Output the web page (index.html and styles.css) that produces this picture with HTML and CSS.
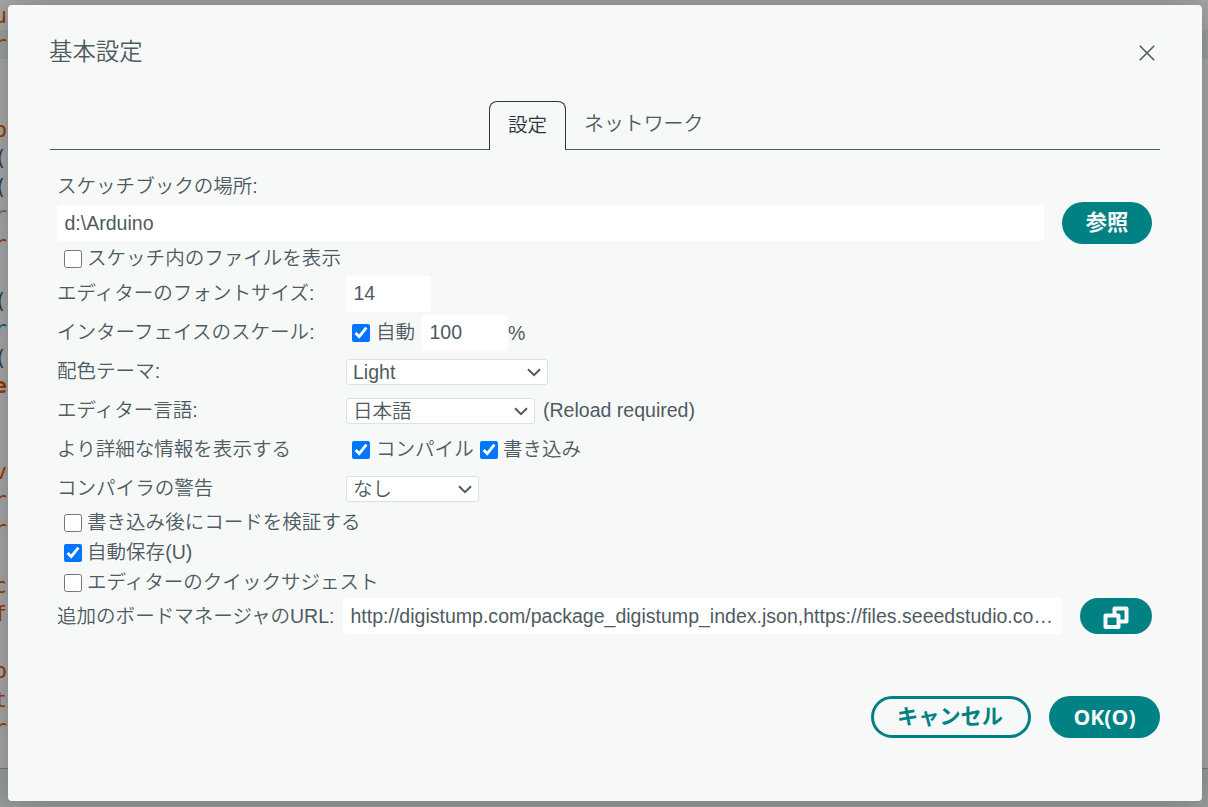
FILE: index.html
```html
<!DOCTYPE html>
<html lang="ja">
<head>
<meta charset="utf-8">
<title>基本設定</title>
<link rel="stylesheet" href="styles.css">
</head>
<body>
<div class="editor">
  <div class="line">u</div><div class="line current">r</div><div class="line"></div><div class="line"></div>
  <div class="line">p</div><div class="line plain">(</div><div class="line plain">(</div><div class="line comment">r</div>
  <div class="line">r</div><div class="line"></div><div class="line plain">(</div><div class="line type">r</div>
  <div class="line plain">(</div><div class="line strong">e</div><div class="line"></div><div class="line"></div>
  <div class="line">v</div><div class="line">r</div><div class="line">r</div><div class="line"></div>
  <div class="line">c</div><div class="line">f</div><div class="line"></div><div class="line">p</div>
  <div class="line">t</div><div class="line">r</div>
  <div class="panel"></div>
</div>
<main class="dialog">
  <header class="head">
    <h1 class="title">基本設定</h1>
    <svg class="close" viewBox="0 0 16 16"><path d="M0.8 0.8 15.2 15.2M15.2 0.8 0.8 15.2"/></svg>
  </header>
  <nav class="tabs">
    <div class="tab active"><span class="t">設定</span></div>
    <div class="tab"><span class="t wide">ネットワーク</span></div>
  </nav>
  <section class="content">
    <div class="caption"><span class="t">スケッチブックの場所:</span></div>
    <div class="path-row">
      <div class="field path grow"><span class="t">d:\Arduino</span></div>
      <button class="btn browse"><span class="t">参照</span></button>
    </div>
    <label class="check first"><input type="checkbox"><span class="t">スケッチ内のファイルを表示</span></label>
    <div class="grid">
      <span class="t">エディターのフォントサイズ:</span>
      <div class="cell"><div class="field size">14</div></div>
      <span class="t">インターフェイスのスケール:</span>
      <div class="cell"><input class="inset" type="checkbox" checked><span class="t auto">自動</span><div class="field scale">100</div><span class="percent">%</span></div>
      <span class="t">配色テーマ:</span>
      <div class="cell"><div class="select theme"><span>Light</span><svg class="chev" viewBox="0 0 14 9"><path d="M1 1.2 7 7.2 13 1.2"/></svg></div></div>
      <span class="t">エディター言語:</span>
      <div class="cell"><div class="select language"><span>日本語</span><svg class="chev" viewBox="0 0 14 9"><path d="M1 1.2 7 7.2 13 1.2"/></svg></div><span class="t reload">(Reload required)</span></div>
      <span class="t">より詳細な情報を表示する</span>
      <div class="cell"><input class="inset" type="checkbox" checked><span class="t compile">コンパイル</span><input class="upload" type="checkbox" checked><span class="t up">書き込み</span></div>
      <span class="t">コンパイラの警告</span>
      <div class="cell"><div class="select warn"><span>なし</span><svg class="chev" viewBox="0 0 14 9"><path d="M1 1.2 7 7.2 13 1.2"/></svg></div></div>
    </div>
    <div class="checks">
      <label class="check"><input type="checkbox"><span class="t">書き込み後にコードを検証する</span></label>
      <label class="check"><input type="checkbox" checked><span class="t">自動保存(U)</span></label>
      <label class="check"><input type="checkbox"><span class="t">エディターのクイックサジェスト</span></label>
    </div>
    <div class="url-row">
      <span class="t url-label">追加のボードマネージャのURL:</span>
      <div class="field grow"><span class="url">http://digistump.com/package_digistump_index.json,https://files.seeedstudio.com/arduino/package_seeeduino_boards_index.json</span></div>
      <button class="btn expand" aria-label="URL"><svg viewBox="0 0 26 24"><path class="ring" d="M11.5 2.5h12v13h-12z"/><path class="front" d="M2.5 9.5h13v11.5h-13z"/></svg></button>
    </div>
  </section>
  <footer class="foot">
    <button class="btn cancel"><span class="t">キャンセル</span></button>
    <button class="btn ok">OK(O)</button>
  </footer>
</main>
</body>
</html>
```
FILE: styles.css
```css
* { box-sizing: border-box; }
body {
  margin: 0;
  width: 1208px;
  height: 807px;
  overflow: hidden;
  position: relative;
  background: #a6a6a6;
  color: #4e5b61;
  font: 350 19.55px/30px "Liberation Sans", "Noto Sans CJK JP", sans-serif;
}
.editor {
  position: absolute;
  inset: 0;
  padding-top: 1.5px;
  display: flex;
  flex-direction: column;
}
.line {
  flex: none;
  width: 8px;
  height: 28.5px;
  padding-right: 1px;
  display: flex;
  justify-content: flex-end;
  overflow: hidden;
  color: #963b00;
  font: 22px/28.5px "DejaVu Sans Mono", monospace;
}
.line.current { width: 100%; padding-right: 1201px; background: #9c9f9f; }
.line.plain { color: #2d3f50; }
.line.comment { color: #656d6e; }
.line.type { color: #00666b; }
.line.strong { font-weight: bold; }
.panel { margin-top: auto; height: 39px; border-top: 1px solid #777b7b; background: #979c9c; }
.dialog {
  position: absolute;
  left: 8px;
  top: 5px;
  width: 1194px;
  height: 796px;
  padding: 0 42px;
  display: flex;
  flex-direction: column;
  background: #f7f9f9;
  border-radius: 4px;
  box-shadow: 0 0 32px rgba(0, 0, 0, .25);
}
.head { height: 96px; display: flex; justify-content: space-between; padding: 27px 5px 0 0; }
.title { margin: 0 0 0 -1px; font: 350 23.4px/36px "Noto Sans CJK JP", sans-serif; }
.close { width: 16px; height: 16px; margin-top: 13px; fill: none; stroke: #4e5b61; stroke-width: 1.6; }
.t { white-space: nowrap; }
.tabs { height: 49px; padding-left: 439px; display: flex; border-bottom: 1px solid #4e5b61; }
.tab { height: 49px; padding: 0 18px; line-height: 47px; }
.tab.active {
  width: 77px;
  background: #f7f9f9;
  border: 1px solid #2c353a;
  border-bottom: 0;
  border-radius: 8px 8px 0 0;
  color: #2c353a;
  line-height: 46px;
}
.wide { font-size: 19.9px; }
.content { padding: 21px 8px 0 7px; }
.caption { height: 31px; }
.path-row { height: 42px; display: flex; align-items: center; gap: 18px; }
.field { height: 36px; padding: 0 7.5px; line-height: 34px; background: #fff; border-radius: 3px; }
.path { line-height: 36px; }
.grow { flex: 1; min-width: 0; }
.btn {
  border: 0;
  border-radius: 21px;
  background: #008184;
  color: #f7f9f9;
  padding: 0;
  height: 42px;
  display: flex;
  align-items: center;
  justify-content: center;
  font: 700 21.2px/38px "Open Sans", "Noto Sans CJK JP", sans-serif;
}
.browse { width: 90px; padding-bottom: 3px; }
input[type="checkbox"] { width: 18px; height: 18px; margin: 0; flex: none; }
.check { height: 30px; display: flex; align-items: center; gap: 5px; padding-left: 7px; }
.check .t { line-height: 28px; }
.check input { position: relative; top: 0.5px; }
.first { height: 31px; padding-bottom: 3px; }
.grid { display: grid; grid-template-columns: 289px 1fr; grid-auto-rows: 38px; row-gap: 1px; line-height: 37px; }
.cell { display: flex; align-items: center; }
.size { width: 85px; }
.scale { width: 86px; }
.inset { margin-left: 6px !important; }
.auto { width: 54px; padding-left: 6px; margin-right: -2px; line-height: 35px; padding-bottom: 2px; }
.percent { padding-top: 1px; }
.select {
  height: 26px;
  padding: 0 6px;
  display: flex;
  align-items: center;
  justify-content: space-between;
  line-height: 24px;
  background: #fff;
  border: 1px solid #dae3e3;
  border-radius: 3px;
}
.theme { width: 202px; }
.language { width: 189px; }
.warn { width: 133px; }
.chev { width: 14px; height: 9px; fill: none; stroke: #4e5b61; stroke-width: 2; }
.reload { padding: 0 0 2px 8px; }
.compile { width: 110px; padding: 0 0 2px 6px; }
.up { padding-bottom: 2px; }
.upload { margin-right: 5px !important; }
.checks { margin-top: -1px; }
.url-row { height: 36px; margin-top: 1px; display: flex; align-items: center; }
.url-label { width: 286px; line-height: 34px; }
.url-row .field { padding-right: 8px; line-height: 36px; }
.url { display: block; overflow: hidden; text-overflow: ellipsis; white-space: nowrap; }
.expand { width: 72px; height: 36px; margin-left: 18px; }
.expand svg { width: 26px; height: 24px; margin-top: 3px; fill: none; stroke: #f7f9f9; stroke-width: 4; stroke-linejoin: round; }
.expand .front { fill: #008184; }
.foot { margin-top: 62px; display: flex; justify-content: flex-end; gap: 18px; }
.cancel { width: 160px; background: transparent; border: 3px solid #008184; color: #008184; padding: 0 2px 3px 0; }
.ok { width: 111px; font-size: 21.2px; padding-bottom: 1px; }
```
